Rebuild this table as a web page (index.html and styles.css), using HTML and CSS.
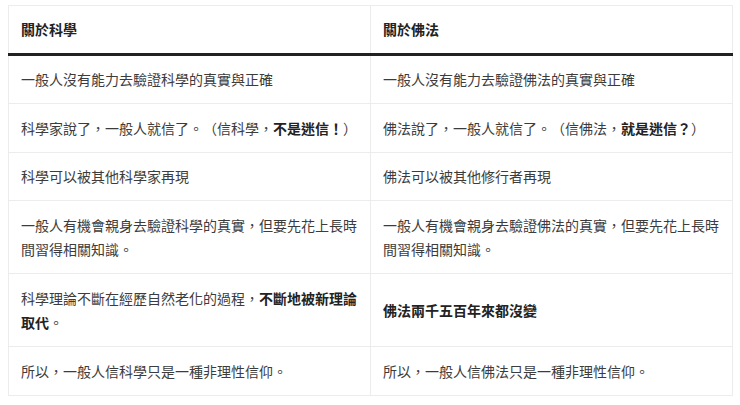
FILE: index.html
```html
<!DOCTYPE html>
<html lang="zh-Hant">
<head>
<meta charset="utf-8">
<link rel="stylesheet" href="styles.css">
</head>
<body>
<table class="compare">
  <thead>
    <tr><th>關於科學</th><th>關於佛法</th></tr>
  </thead>
  <tbody>
    <tr><td>一般人沒有能力去驗證科學的真實與正確</td><td>一般人沒有能力去驗證佛法的真實與正確</td></tr>
    <tr><td>科學家說了，一般人就信了。（信科學，<strong>不是迷信！</strong>）</td><td>佛法說了，一般人就信了。（信佛法，<strong>就是迷信？</strong>）</td></tr>
    <tr><td>科學可以被其他科學家再現</td><td>佛法可以被其他修行者再現</td></tr>
    <tr><td>一般人有機會親身去驗證科學的真實，但要先花上長時間習得相關知識。</td><td>一般人有機會親身去驗證佛法的真實，但要先花上長時間習得相關知識。</td></tr>
    <tr><td>科學理論不斷在經歷自然老化的過程，<strong>不斷地被新理論取代</strong>。</td><td><strong>佛法兩千五百年來都沒變</strong></td></tr>
    <tr><td>所以，一般人信科學只是一種非理性信仰。</td><td>所以，一般人信佛法只是一種非理性信仰。</td></tr>
  </tbody>
</table>
</body>
</html>
```
FILE: styles.css
```css
html, body {
  margin: 0;
  background: #fff;
}
body {
  padding: 5px 7px 0 8px;
  font-family: "Noto Sans CJK TC", "Noto Sans", sans-serif;
  font-size: 14px;
  color: #3c3c3c;
  text-spacing-trim: space-all;
}
.compare {
  width: 725px;
  border-collapse: collapse;
  table-layout: fixed;
  border: 1px solid #ececec;
}
.compare th,
.compare td {
  text-align: left;
  vertical-align: middle;
  padding: 11.5px 12px;
  line-height: 24.5px;
  border: 1px solid #ececec;
}
.compare th {
  font-weight: 700;
  color: #222;
  padding: 11px 12px 11px;
  border-bottom: 3px solid #222;
}
.compare td strong {
  font-weight: 700;
  color: #222;
}
```
